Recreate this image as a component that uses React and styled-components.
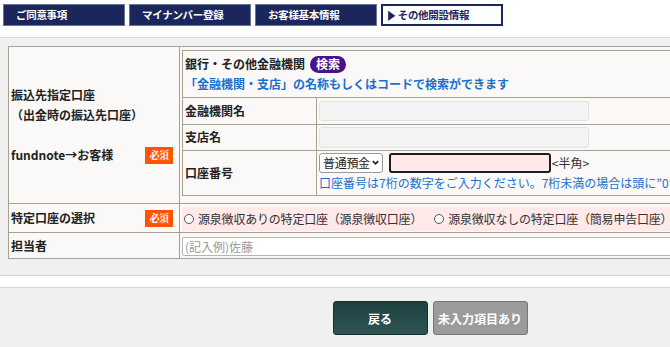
import React from "react";
import styled, { createGlobalStyle } from "styled-components";

const GlobalStyle = createGlobalStyle`
  html, body { margin: 0; padding: 0; background: #fff; overflow: hidden; }
  body { font-family: "Noto Sans CJK JP", "Noto Sans", sans-serif; color: #222; }
  * { box-sizing: border-box; }
`;

const Page = styled.div`
  width: 860px;
`;

const TabBar = styled.div`
  display: flex;
  gap: 4px;
  padding: 4px 0 0 3px;
  height: 37px;
`;

const Tab = styled.div`
  width: 122px;
  height: 22px;
  display: flex;
  align-items: center;
  padding-left: ${(p) => (p.$active ? "3px" : "12px")};
  font-size: 10.5px;
  font-weight: 700;
  letter-spacing: -0.3px;
  background: ${(p) => (p.$active ? "#fff" : "#1b275c")};
  color: ${(p) => (p.$active ? "#1b275c" : "#fff")};
  border: ${(p) => (p.$active ? "2px solid #1b275c" : "1px solid #6b7499")};
  line-height: 1;
`;

const Arrow = styled.span`
  font-size: 11px;
  margin-right: 1px;
  transform: scaleX(0.8);
  display: inline-block;
`;

const Panel = styled.div`
  background: #f0f0f0;
  border-top: 1px solid #dcdcdc;
  border-bottom: 1px solid #d6d6d6;
  padding: 8px 8px 16px 8px;
`;

const FormTable = styled.table`
  width: 100%;
  border-collapse: collapse;
  background: #faf9f7;
  border: 1px solid #a6a191;
  font-size: 12px;
  line-height: 18px;
  td {
    border: 1px solid #a6a191;
  }
`;

const HeadCell = styled.td`
  width: 171px;
  padding: 0 6px 0 2px;
  vertical-align: middle;
  font-weight: 700;
  line-height: 20px;
  height: ${(p) => p.$h || "auto"};
`;

const HeadInner = styled.div`
  display: flex;
  align-items: center;
  justify-content: space-between;
  height: 20px;
`;

const Required = styled.span`
  display: inline-flex;
  align-items: center;
  justify-content: center;
  width: 28px;
  height: 17px;
  background: #ff5300;
  color: #fff;
  font-family: "Noto Serif CJK JP", "Noto Sans CJK JP", serif;
  font-size: 10px;
  font-weight: 700;
  letter-spacing: -0.5px;
  line-height: 1;
`;

const BodyCell = styled.td`
  padding: ${(p) => p.$pad || "2px"};
  vertical-align: middle;
`;

const InnerTable = styled.table`
  width: 100%;
  border-collapse: collapse;
  border: 1px solid #a6a191;
  font-size: 12px;
  td {
    border: 1px solid #a6a191;
  }
`;

const LabelCell = styled.td`
  width: 134px;
  padding: 0 2px;
  font-weight: 700;
  vertical-align: middle;
  height: ${(p) => p.$h};
  line-height: 18px;
`;

const ValueCell = styled.td`
  padding: ${(p) => p.$pad || "2px"};
  vertical-align: middle;
  height: ${(p) => p.$h};
  line-height: 18px;
`;

const BankHead = styled.td`
  padding: 3px 2px 2px;
  height: 47px;
  line-height: 20px;
`;

const BankTitle = styled.div`
  display: flex;
  align-items: center;
  gap: 5px;
  font-weight: 700;
  height: 20px;
`;

const SearchPill = styled.span`
  display: inline-flex;
  align-items: center;
  justify-content: center;
  background: #4a1189;
  color: #fff;
  font-weight: 700;
  font-size: 12px;
  height: 17px;
  width: 36px;
  border-radius: 9px;
  line-height: 1;
`;

const BlueText = styled.div`
  color: #1a6fcf;
  font-weight: ${(p) => (p.$bold ? 700 : 400)};
  white-space: nowrap;
  line-height: 20px;
  height: 20px;
`;

const GrayInput = styled.div`
  width: 270px;
  height: ${(p) => p.$h || "20px"};
  background: #f3f3f3;
  border: 1px solid #e1e1e1;
  border-radius: 3px;
`;

const AccountLine = styled.div`
  display: flex;
  align-items: center;
  gap: 6px;
  white-space: nowrap;
  height: 20px;
`;

const Select = styled.div`
  display: inline-flex;
  align-items: center;
  gap: 1px;
  height: 20px;
  padding: 0 2px 0 3px;
  border: 1px solid #9a9a9a;
  border-radius: 3px;
  background: #fff;
  font-size: 12px;
  letter-spacing: -0.3px;
  line-height: 1;
`;

const PinkInput = styled.div`
  width: 162px;
  height: 20px;
  background: #ffe9e9;
  border: 2px solid #1e1e1e;
  border-radius: 3px;
`;

const Hint = styled.span`
  margin-left: -5px;
  font-size: 12px;
  color: #333;
`;

const RadioBand = styled.div`
  background: #ffe9e9;
  height: 24px;
  display: flex;
  align-items: center;
  gap: 12px;
  padding-left: 2px;
  white-space: nowrap;
  font-size: 12px;
  letter-spacing: -0.2px;
  color: #333;
`;

const RadioOption = styled.label`
  display: inline-flex;
  align-items: center;
  gap: 4px;
`;

const RadioDot = styled.span`
  width: 10px;
  height: 10px;
  border-radius: 50%;
  border: 1px solid #555;
  background: #fff;
  display: inline-block;
`;

const TextInput = styled.input`
  display: block;
  width: 100%;
  height: 19px;
  border: 1px solid #b5b5b5;
  border-radius: 2px;
  background: #fff;
  font-family: inherit;
  font-size: 12px;
  padding: 0 2px;
  outline: none;
  &::placeholder { color: #9a9a9a; }
`;

const Gap = styled.div`
  height: 11px;
  background: #fff;
`;

const Footer = styled.div`
  background: #f0f0f0;
  border-top: 1px solid #d8d8d8;
  height: 60px;
  display: flex;
  justify-content: center;
  gap: 5px;
  padding-top: 13px;
`;

const Button = styled.div`
  width: 95px;
  height: 34px;
  border-radius: 3px;
  display: flex;
  align-items: center;
  justify-content: center;
  color: #fff;
  font-weight: 700;
  font-size: 12px;
  background: ${(p) =>
    p.$variant === "gray"
      ? "#9b9b9b"
      : "linear-gradient(#1c4140, #2e5453)"};
  border: 1px solid ${(p) => (p.$variant === "gray" ? "#777" : "#13302f")};
`;

export default function App() {
  return (
    <Page>
      <GlobalStyle />
      <TabBar>
        <Tab>ご同意事項</Tab>
        <Tab>マイナンバー登録</Tab>
        <Tab>お客様基本情報</Tab>
        <Tab $active>
          <Arrow>▶</Arrow>その他開設情報
        </Tab>
      </TabBar>
      <Panel>
        <FormTable>
          <tbody>
            <tr>
              <HeadCell $h="157px">
                振込先指定口座
                <br />
                （出金時の振込先口座）
                <br />
                <br />
                <HeadInner>
                  <span>fundnote→お客様</span>
                  <Required>必須</Required>
                </HeadInner>
              </HeadCell>
              <BodyCell $pad="2px 2px 7px 2px">
                <InnerTable>
                  <tbody>
                    <tr>
                      <BankHead colSpan={2}>
                        <BankTitle>
                          銀行・その他金融機関<SearchPill>検索</SearchPill>
                        </BankTitle>
                        <BlueText $bold>
                          「金融機関・支店」の名称もしくはコードで検索ができます
                        </BlueText>
                      </BankHead>
                    </tr>
                    <tr>
                      <LabelCell $h="27px">金融機関名</LabelCell>
                      <ValueCell $h="27px">
                        <GrayInput />
                      </ValueCell>
                    </tr>
                    <tr>
                      <LabelCell $h="26px">支店名</LabelCell>
                      <ValueCell $h="26px">
                        <GrayInput $h="21px" />
                      </ValueCell>
                    </tr>
                    <tr>
                      <LabelCell $h="45px">口座番号</LabelCell>
                      <ValueCell $h="45px">
                        <AccountLine>
                          <Select>
                            普通預金
                            <svg width="9" height="9" viewBox="0 0 10 10">
                              <path d="M2 3.5 L5 6.5 L8 3.5" fill="none" stroke="#222" strokeWidth="1.8" />
                            </svg>
                          </Select>
                          <PinkInput />
                          <Hint>&lt;半角&gt;</Hint>
                        </AccountLine>
                        <BlueText>
                          口座番号は7桁の数字をご入力ください。7桁未満の場合は頭に”0”をつけてご入力ください。
                        </BlueText>
                      </ValueCell>
                    </tr>
                  </tbody>
                </InnerTable>
              </BodyCell>
            </tr>
            <tr>
              <HeadCell $h="29px">
                <HeadInner>
                  <span>特定口座の選択</span>
                  <Required>必須</Required>
                </HeadInner>
              </HeadCell>
              <BodyCell $pad="3px 2px 1px 2px">
                <RadioBand>
                  <RadioOption>
                    <RadioDot />
                    源泉徴収ありの特定口座（源泉徴収口座）
                  </RadioOption>
                  <RadioOption>
                    <RadioDot />
                    源泉徴収なしの特定口座（簡易申告口座）
                  </RadioOption>
                </RadioBand>
              </BodyCell>
            </tr>
            <tr>
              <HeadCell $h="26px">担当者</HeadCell>
              <BodyCell $pad="3px 2px 2px 2px">
                <TextInput placeholder="(記入例)佐藤" />
              </BodyCell>
            </tr>
          </tbody>
        </FormTable>
      </Panel>
      <Gap />
      <Footer>
        <Button>戻る</Button>
        <Button $variant="gray">未入力項目あり</Button>
      </Footer>
    </Page>
  );
}
